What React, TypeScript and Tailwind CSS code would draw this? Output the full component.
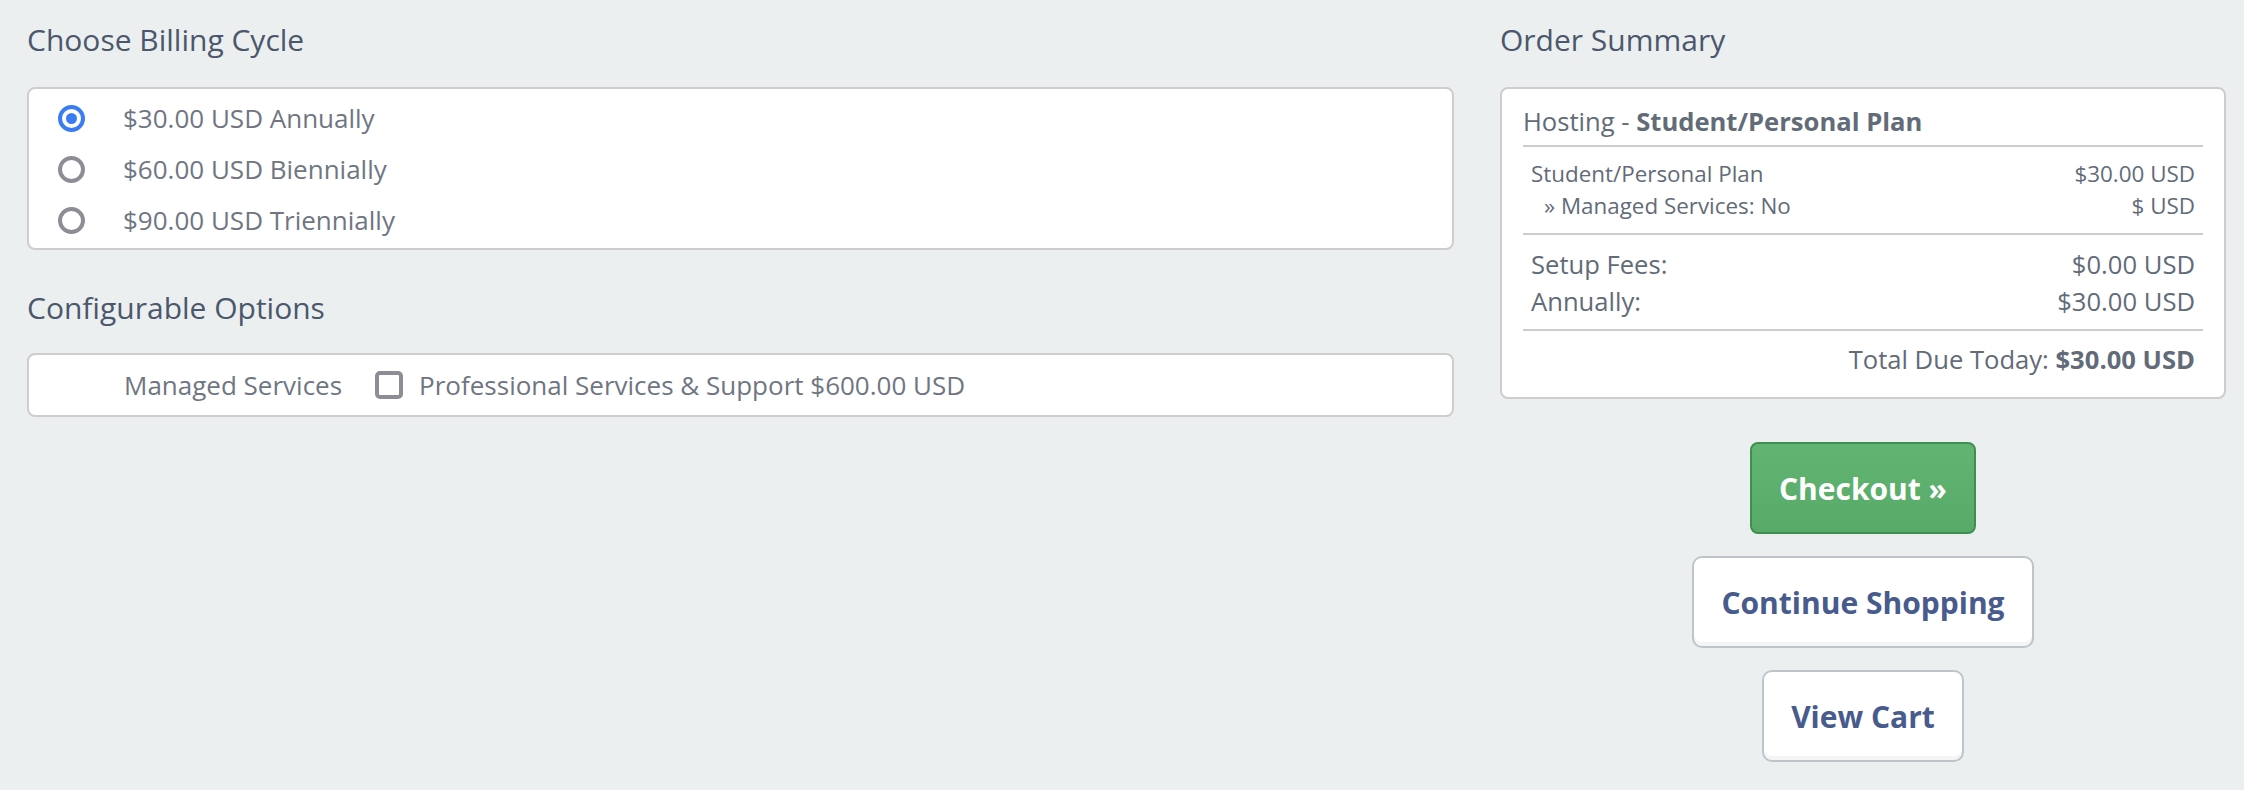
import { useState } from 'react';

const cycles = [
  { id: 'annually', label: '$30.00 USD Annually' },
  { id: 'biennially', label: '$60.00 USD Biennially' },
  { id: 'triennially', label: '$90.00 USD Triennially' },
];

function Radio({ checked }: { checked: boolean }) {
  if (checked) {
    return (
      <span className="flex h-[27px] w-[27px] shrink-0 items-center justify-center rounded-full border-[4px] border-[#3a7cf2]">
        <span className="h-[11px] w-[11px] rounded-full bg-[#3a7cf2]" />
      </span>
    );
  }
  return <span className="h-[27px] w-[27px] shrink-0 rounded-full border-[4px] border-[#8e8d96]" />;
}

export default function App() {
  const [cycle, setCycle] = useState('annually');
  const [managed, setManaged] = useState(false);

  return (
    <div className="min-h-[790px] w-full bg-[#ebeff0] font-['Open_Sans','Noto_Sans',sans-serif]">
      <div className="flex gap-[46px] pl-[27px] pt-[20px]">
        {/* kolom kiri */}
        <div className="w-[1427px]">
          <h3 className="text-[30px] leading-[40px] text-[#4b576b]">Choose Billing Cycle</h3>
          <div className="mt-[27px] rounded-[8px] border-2 border-[#cdcdcd] bg-white pb-[2px] pt-[4px]">
            {cycles.map((c) => (
              <label
                key={c.id}
                onClick={() => setCycle(c.id)}
                className="flex h-[51px] cursor-pointer items-center gap-[38px] pl-[29px] text-[26px] text-[#6f7682]"
              >
                <Radio checked={cycle === c.id} />
                <span>{c.label}</span>
              </label>
            ))}
          </div>

          <h3 className="mt-[38px] text-[30px] leading-[40px] text-[#4b576b]">Configurable Options</h3>
          <div className="mt-[25px] flex h-[64px] items-center rounded-[8px] border-2 border-[#cdcdcd] bg-white pl-[95px] text-[26px] text-[#6f7682]">
            <span>Managed Services</span>
            <span
              onClick={() => setManaged(!managed)}
              className="ml-[33px] flex h-[28px] w-[28px] cursor-pointer items-center justify-center rounded-[5px] border-[4px] border-[#8e8d96]"
            >
              {managed && <span className="h-[10px] w-[10px] bg-[#8e8d96]" />}
            </span>
            <span className="ml-[16px]">Professional Services &amp; Support $600.00 USD</span>
          </div>
        </div>

        {/* kolom kanan */}
        <div className="w-[726px]">
          <h3 className="text-[30px] leading-[40px] text-[#4b576b]">Order Summary</h3>
          <div className="mt-[27px] rounded-[8px] border-2 border-[#cdcdcd] bg-white px-[21px] pb-[19px] pt-[14px] text-[#626b78]">
            <div className="text-[25.6px] leading-[38px]">
              Hosting - <span className="font-bold">Student/Personal Plan</span>
            </div>
            <div className="mt-[4px] border-t-2 border-[#cccccc] py-[11px] text-[22.4px] leading-[32px]">
              <div className="flex justify-between px-[8px]">
                <span>Student/Personal Plan</span>
                <span>$30.00 USD</span>
              </div>
              <div className="flex justify-between px-[8px]">
                <span className="pl-[13px]">» Managed Services: No</span>
                <span>$ USD</span>
              </div>
            </div>
            <div className="border-t-2 border-[#cccccc] pb-[9px] pt-[11px] text-[25.6px] leading-[37px]">
              <div className="flex justify-between px-[8px]">
                <span>Setup Fees:</span>
                <span>$0.00 USD</span>
              </div>
              <div className="flex justify-between px-[8px]">
                <span>Annually:</span>
                <span>$30.00 USD</span>
              </div>
            </div>
            <div className="border-t-2 border-[#cccccc] pt-[10px] text-right text-[25.6px] leading-[37px]">
              <div className="px-[8px]">
                Total Due Today: <span className="font-bold">$30.00 USD</span>
              </div>
            </div>
          </div>

          <div className="mt-[43px] flex flex-col items-center gap-[22px]">
            <button className="flex h-[92px] items-center rounded-[8px] border-2 border-[#3f904f] bg-gradient-to-b from-[#62b472] to-[#57aa67] px-[27px] text-[30px] font-bold text-white">
              Checkout »
            </button>
            <button className="flex h-[92px] items-center rounded-[10px] border-2 border-[#bec4c9] bg-white px-[27px] text-[30px] font-bold text-[#475b8c] shadow-[inset_0_-4px_0_rgba(0,0,0,0.04)]">
              Continue Shopping
            </button>
            <button className="flex h-[92px] items-center rounded-[10px] border-2 border-[#bec4c9] bg-white px-[27px] text-[30px] font-bold text-[#475b8c] shadow-[inset_0_-4px_0_rgba(0,0,0,0.04)]">
              View Cart
            </button>
          </div>
        </div>
      </div>
    </div>
  );
}
